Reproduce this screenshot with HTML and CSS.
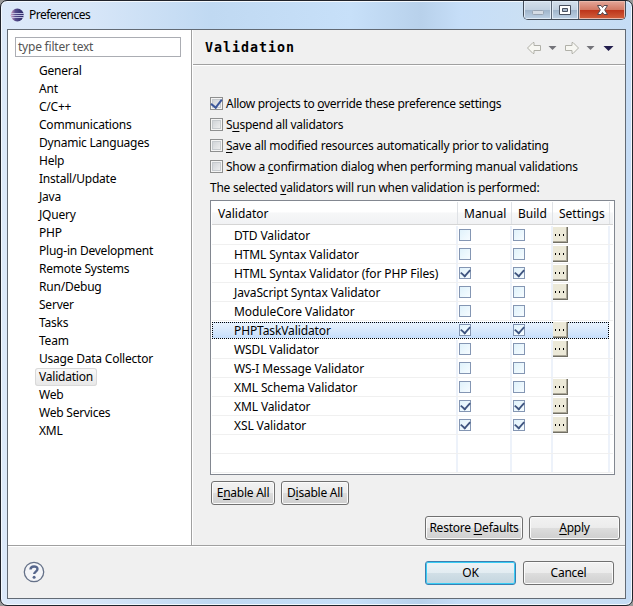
FILE: index.html
```html
<!DOCTYPE html>
<html lang="en">
<head>
<meta charset="utf-8">
<title>Preferences</title>
<link rel="stylesheet" href="styles.css">
</head>
<body>
<div class="window">
  <header class="titlebar">
    <svg class="logo" width="14" height="14" viewBox="0 0 14 14">
      <defs><linearGradient id="lg" x1="0" x2="1" y1="0" y2="0"><stop offset="0" stop-color="#d09abb"/><stop offset=".35" stop-color="#554c8c"/><stop offset="1" stop-color="#252563"/></linearGradient></defs>
      <circle cx="7.300" cy="7" r="6.400" fill="url(#lg)"/>
      <path d="M1 5.500h13M0 7.500h14M1 9.500h13" stroke="#c9cbea" stroke-width=".9"/>
    </svg>
    <span class="title">Preferences</span>
    <div class="controls">
      <span class="ctl min"><svg width="28" height="18"><rect x="8.500" y="9.500" width="11" height="4" rx="1" fill="#d5dce5" stroke="#98a4b3"/></svg></span>
      <span class="ctl max"><svg width="27" height="18"><path d="M7.500 4.500h11v9h-11z" fill="#fff" stroke="#48505f"/><path d="M10.500 7.500h5v3h-5z" fill="#a9b9cc" stroke="#48505f"/></svg></span>
      <span class="ctl close"><svg width="46" height="18"><path d="M18.500 4.500h3.500l1.500 2 1.500-2h3.500l-2.800 4.500 2.800 4.500h-3.500l-1.500-2-1.500 2h-3.500l2.800-4.500z" fill="#fff" stroke="#53484f"/></svg></span>
    </div>
  </header>
  <main class="client">
    <aside class="side">
      <div class="filter">type filter text</div>
      <ul class="tree">
        <li><span>General</span></li><li><span>Ant</span></li><li><span>C/C++</span></li><li><span>Communications</span></li><li><span>Dynamic Languages</span></li><li><span>Help</span></li><li><span>Install/Update</span></li><li><span>Java</span></li><li><span>JQuery</span></li><li><span>PHP</span></li><li><span>Plug-in Development</span></li><li><span>Remote Systems</span></li><li><span>Run/Debug</span></li><li><span>Server</span></li><li><span>Tasks</span></li><li><span>Team</span></li><li><span>Usage Data Collector</span></li><li class="current"><span>Validation</span></li><li><span>Web</span></li><li><span>Web Services</span></li><li><span>XML</span></li>
      </ul>
    </aside>
    <section class="page">
      <div class="head">
        <h1>Validation</h1>
        <svg class="nav" width="90" height="16" viewBox="0 0 90 16">
          <g fill="#f7f7f2" stroke="#b0b0a8"><path d="M3.500 8l5.500-5.500h1v3h6.500v5h-6.500v3h-1z"/><path d="M54.500 8l-5.500-5.500h-1v3h-6.500v5h6.500v3h1z"/></g>
          <path d="M24.500 6h8l-4 4zM62.500 6h8l-4 4z" fill="#737379"/>
          <path d="M79.500 6h10l-5 5z" fill="#211d4c"/>
        </svg>
      </div>
      <div class="options">
        <label><i class="box on"></i><span>Allow projects to <u>o</u>verride these preference settings</span></label>
        <label><i class="box"></i><span>S<u>u</u>spend all validators</span></label>
        <label class="looser"><i class="box"></i><span><u>S</u>ave all modified resources automatically prior to validating</span></label>
        <label class="looser"><i class="box"></i><span>Show a <u>c</u>onfirmation dialog when performing manual validations</span></label>
      </div>
      <p class="caption">The selected <u>v</u>alidators will run when validation is performed:</p>
      <div class="table">
        <div class="row th"><b>Validator</b><b>Manual</b><b>Build</b><b>Settings</b><b></b></div>
        <div class="row"><b>DTD Validator</b><b><i></i></b><b><i></i></b><b><em></em></b><b></b></div>
        <div class="row"><b>HTML Syntax Validator</b><b><i></i></b><b><i></i></b><b><em></em></b><b></b></div>
        <div class="row"><b>HTML Syntax Validator (for PHP Files)</b><b><i class="on"></i></b><b><i class="on"></i></b><b><em></em></b><b></b></div>
        <div class="row"><b>JavaScript Syntax Validator</b><b><i></i></b><b><i></i></b><b><em></em></b><b></b></div>
        <div class="row"><b>ModuleCore Validator</b><b><i></i></b><b><i></i></b><b></b><b></b></div>
        <div class="row sel"><b>PHPTaskValidator</b><b><i class="on"></i></b><b><i class="on"></i></b><b><em></em></b><b></b></div>
        <div class="row"><b>WSDL Validator</b><b><i></i></b><b><i></i></b><b><em></em></b><b></b></div>
        <div class="row"><b>WS-I Message Validator</b><b><i></i></b><b><i></i></b><b></b><b></b></div>
        <div class="row"><b>XML Schema Validator</b><b><i></i></b><b><i></i></b><b><em></em></b><b></b></div>
        <div class="row"><b>XML Validator</b><b><i class="on"></i></b><b><i class="on"></i></b><b><em></em></b><b></b></div>
        <div class="row"><b>XSL Validator</b><b><i class="on"></i></b><b><i class="on"></i></b><b><em></em></b><b></b></div>
        <div class="row"><b></b><b></b><b></b><b></b><b></b></div>
        <div class="row"><b></b><b></b><b></b><b></b><b></b></div>
      </div>
      <div class="bulk"><button class="enable"><span>E<u>n</u>able All</span></button><button class="disable"><span>D<u>i</u>sable All</span></button></div>
      <div class="apply"><button class="restore"><span>Restore <u>D</u>efaults</span></button><button><span><u>A</u>pply</span></button></div>
    </section>
    <footer class="foot">
      <svg class="help" width="22" height="22" viewBox="0 0 22 22"><circle cx="11" cy="11" r="9.700" fill="#f4f5f8" stroke="#657188" stroke-width="1.300"/><path d="M7.500 8.500c0-4 7-4 7-.4 0 2.400-3.300 2.600-3.300 5" fill="none" stroke="#56668c" stroke-width="2.400"/><circle cx="11.100" cy="16.200" r="1.500" fill="#56668c"/></svg>
      <button class="ok"><span>OK</span></button><button><span>Cancel</span></button>
    </footer>
  </main>
</div>
</body>
</html>
```
FILE: styles.css
```css
* { box-sizing: border-box; }
body { margin: 0; background: #999; font: 12px/18px "Noto Sans", "Open Sans", sans-serif; letter-spacing: -.11px; color: #000; overflow: hidden; }
u { text-decoration: underline; text-underline-offset: 2px; text-decoration-thickness: 1px; text-decoration-skip-ink: none; }
.window { width: 633px; height: 606px; border: 1px solid #20232b; border-radius: 7px; padding: 0 6px 6px 6px; display: flex; flex-direction: column;
  box-shadow: inset 0 0 0 1px #f3f8fd;
  background: linear-gradient(90deg, #dce9f9 0, #d7e6f8 90px, #c0d9f2 210px, #c7e0f9 350px, #b8d1eb 420px, #c6def8 460px, #cce0f2 540px, #c5dcf5 100%); }
.titlebar { height: 28px; flex: none; display: flex; }
.logo { margin: 7px 0 0 3px; }
.title { margin: 5px 0 0 5px; letter-spacing: -.5px; }
.controls { margin-left: auto; width: 103px; height: 19px; display: flex; border: 1px solid #424b57; border-top: 0; border-radius: 0 0 5px 5px; overflow: hidden; }
.ctl { height: 18px; border-right: 1px solid #596575; background: linear-gradient(#d4dfeb 0, #c1d0e0 48%, #9fb4ca 50%, #bed2e6 100%); box-shadow: inset 0 0 0 1px #e0ebf6; }
.ctl svg { display: block; }
.min { width: 28px; }
.max { width: 27px; }
.close { width: 46px; border: 0; background: linear-gradient(#e4a79a 0, #d27964 48%, #bc3319 50%, #d2603c 100%); box-shadow: inset 0 0 0 1px #eab8aa; }
.client { flex: 1; border: 1px solid #626a74; background: #f0f0f0; display: grid; grid-template-columns: 184px 1fr; grid-template-rows: 515px 1fr; }
.side { background: #fff; border-right: 1px solid #a0a0a0; padding: 7px 10px 0 7px; }
.filter { height: 20px; border: 1px solid #abadb3; color: #555; padding-left: 2px; line-height: 18px; letter-spacing: -.22px; }
.tree { list-style: none; margin: 5px 0 0; padding: 0 0 0 20px; letter-spacing: -.22px; }
.tree li { height: 18px; display: flex; }
.tree span { padding: 0 4px; line-height: 17px; white-space: nowrap; }
.tree .current span { background: linear-gradient(#fafafa, #e7e7e7); box-shadow: inset 0 0 0 1px #d9d9d9; border-radius: 3px; }
.page { min-width: 0; border-left: 1px solid #fff; }
.head { height: 35px; border-bottom: 1px solid #a0a0a0; box-shadow: 0 1px #fff; padding: 0 11px 0 12px; display: flex; align-items: center; justify-content: space-between; }
h1 { margin: 2px 0 0; font: bold 13.300px/18px "DejaVu Sans Mono", monospace; letter-spacing: .99px; }
.nav { margin-top: 2px; }
.options { padding: 28px 0 0 17px; letter-spacing: -.28px; }
.options .looser { letter-spacing: -.23px; }
.options label { height: 21px; display: flex; align-items: center; gap: 3px; white-space: nowrap; }
.box { width: 13px; height: 13px; flex: none; border: 1px solid #8e8f8f; background: linear-gradient(135deg, #c9cdd2, #f4f4f4); box-shadow: inset 0 0 0 1px #f4f4f4, inset 0 0 0 2px #c6cace; display: grid; place-items: center; }
.box.on::after { content: ""; width: 5px; height: 9px; border: solid #3c579a; border-width: 0 2px 2px 0; transform: translateY(-1px) rotate(38deg); }
.caption { margin: 0 0 0 17px; height: 23px; line-height: 21px; letter-spacing: -.26px; white-space: nowrap; }
.table { margin-left: 17px; width: 405px; height: 275px; border: 1px solid #828790; background: #fff; padding: 1px 1px 0; }
.row { display: grid; grid-template-columns: 246px 54px 41px 57px 1fr; height: 19px; border-bottom: 1px solid #f0f0f0; }
.row b { font-weight: normal; line-height: 19px; white-space: nowrap; border-right: 2px solid #edf2fa; padding-left: 1px; height: 18px; }
.row b:first-child { padding-left: 22px; }
.row b:last-child { border: 0; }
.row.th { height: 23px; border-bottom: 1px solid #d5d5d5; background: linear-gradient(#fff 0, #fff 45%, #f6f7f8 50%, #f1f2f4 100%); margin-bottom: 1px; letter-spacing: 0; }
.row.th b { line-height: 23px; height: 22px; border-right: 1px solid #dfe2e6; padding-left: 6px; }
.row.th b:last-child { border: 0; }
.row i { display: grid; place-items: center; width: 12px; height: 12px; margin-top: 3px; border: 1px solid #8496b3; background: linear-gradient(135deg, #e0f2fb, #f6fcff); }
.row i.on::after { content: ""; width: 5px; height: 8px; border: solid #3f5580; border-width: 0 2px 2px 0; transform: translateY(-1px) rotate(42deg) scale(.9); }
.row em { display: block; width: 15px; height: 16px; margin: 1px 0 0 -1px; background: linear-gradient(#000, #000) 2px 7px / 1px 2px no-repeat, linear-gradient(#000, #000) 6px 7px / 1px 2px no-repeat, linear-gradient(#000, #000) 10px 7px / 1px 2px no-repeat, #ece9d8; border: solid #716f64; border-width: 0 1px 1px 0; box-shadow: inset -1px -1px #aca899; }
.row.sel { background: linear-gradient(#e8f2fd, #c7dffc); border: 1px dotted #000; height: 17px; width: 397px; grid-template-columns: 245px 54px 41px 1fr 0; margin: 1px 0; }
.sel b { border-color: transparent; height: 15px; line-height: 15px; }
.sel b:first-child { padding-left: 21px; }
.sel i { margin-top: 1px; }
.sel em { margin-top: -1px; }
button { font: inherit; letter-spacing: -.25px; color: #000; width: 91px; height: 24px; padding: 0; border: 1px solid #707070; border-radius: 3px; background: linear-gradient(#f2f2f2 0, #ebebeb 50%, #ddd 51%, #cfcfcf 100%); box-shadow: inset 0 0 0 1px #fbfbfb; white-space: nowrap; line-height: 20px; }
.bulk { display: flex; gap: 6px; padding: 6px 0 0 18px; }
.enable { width: 64px; }
.disable { width: 68px; }
.apply { display: flex; justify-content: flex-end; gap: 6px; padding: 11px 5px 0 0; }
.restore { width: 98px; letter-spacing: -.25px; }
.foot { grid-column: 1 / 3; border-top: 1px solid #a0a0a0; box-shadow: inset 0 1px #fff; display: flex; padding: 15px 11px 0 15px; gap: 7px; }
.help { margin-right: auto; }
.ok { border-color: #3c7fb1; box-shadow: inset 0 0 0 1px #38cdf5; background: linear-gradient(#eef3f6 0, #e2ecf1 50%, #d1dfe6 51%, #c3d5df 100%); }
```
